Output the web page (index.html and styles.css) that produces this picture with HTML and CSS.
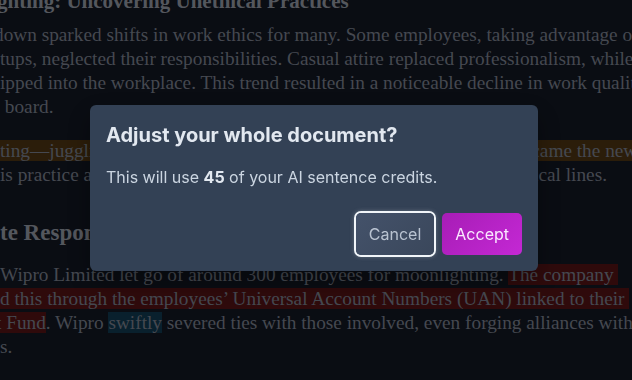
FILE: index.html
```html
<!DOCTYPE html>
<html lang="en">
<head>
    <meta charset="UTF-8">
    <meta name="viewport" content="width=device-width, initial-scale=1.0">
    <title>Adjust document</title>
    <link rel="stylesheet" href="styles.css">
</head>
<body>
    <main class="doc">
        <h1 class="doc-title"><span class="ln ln-cut-3">ghting: Uncovering Unethical Practices</span></h1>
        <p class="doc-para">
            <span class="ln ln-cut-6">down sparked shifts in work ethics for many. Some employees, taking advantage of</span>
            <span class="ln">tups, neglected their responsibilities. Casual attire replaced professionalism, while</span>
            <span class="ln">ipped into the workplace. This trend resulted in a noticeable decline in work quality</span>
            <span class="ln">&nbsp;board.</span>
        </p>
        <p class="doc-para">
            <span class="ln"><mark class="hl hl-orange">ting—juggling multiple jobs simultaneously while still employed, became the new norm</mark></span>
            <span class="ln">is practice also raised questions about workplace loyalty, blurring ethical lines.</span>
        </p>
        <h2 class="doc-heading"><span class="ln">te Response</span></h2>
        <p class="doc-para">
            <span class="ln">Wipro Limited let go of around 300 employees for moonlighting. <mark class="hl hl-red">The company&nbsp;</mark></span>
            <span class="ln"><mark class="hl hl-red">d this through the employees’ Universal Account Numbers (UAN) linked to their&nbsp;</mark></span>
            <span class="ln ln-cut-4"><mark class="hl hl-red">t Fund</mark>. Wipro <mark class="hl hl-blue">swiftly</mark> severed ties with those involved, even forging alliances with</span>
            <span class="ln">s.</span>
        </p>
    </main>

    <div class="backdrop">
        <section class="dialog" role="dialog" aria-labelledby="dialog-title">
            <h2 class="dialog-title" id="dialog-title">Adjust your whole document?</h2>
            <p class="dialog-text">This will use <strong>45</strong> of your AI sentence credits.</p>
            <div class="dialog-actions">
                <button class="btn btn-cancel">Cancel</button>
                <button class="btn btn-accept">Accept</button>
            </div>
        </section>
    </div>
</body>
</html>
```
FILE: styles.css
```css
/* Page */
body {
    margin: 0;
    height: 100vh;
    overflow: hidden;
    background-color: #141a26;
    font-family: "Liberation Serif", serif;
}

/* Document underneath (scrolled) */
.doc {
    margin-top: -14px;
    color: #8a91a0;
    font-size: 19.3px;
    line-height: 24px;
    white-space: nowrap;
}

.ln {
    display: block;
}

.ln-cut-3 { margin-left: -3px; }
.ln-cut-4 { margin-left: -4px; }
.ln-cut-6 { margin-left: -6px; }

.doc-title {
    margin: 0 0 7px;
    font-size: 21px;
    line-height: 30px;
    font-weight: 700;
    color: #a8aeba;
}

.doc-para {
    margin: 0 0 20px;
}

.doc-heading {
    margin: 30px 0 14px;
    font-size: 23px;
    line-height: 32px;
    font-weight: 700;
    color: #a8aeba;
}

.hl {
    color: inherit;
}

.hl-orange { background-color: #573a14; }
.hl-red { background-color: #5e1517; }
.hl-blue { background-color: #12405a; }

/* Modal */
.backdrop {
    position: fixed;
    inset: 0;
    background-color: rgba(0, 0, 0, 0.5);
    display: flex;
    align-items: center;
    justify-content: center;
    padding: 0 4px 4px 0;
}

.dialog {
    width: 448px;
    box-sizing: border-box;
    padding: 16px;
    background-color: #334155;
    border-radius: 6px;
    box-shadow: 0 10px 25px rgba(0, 0, 0, 0.3);
    font-family: Inter, "Liberation Sans", sans-serif;
}

.dialog-title {
    margin: 0 0 16px;
    font-size: 20px;
    line-height: 28px;
    font-weight: 700;
    color: #e2e8f0;
}

.dialog-text {
    margin: 0 0 24px;
    font-size: 16px;
    line-height: 24px;
    color: #cbd5e1;
}

.dialog-text strong {
    color: #e2e8f0;
}

.dialog-actions {
    display: flex;
    justify-content: flex-end;
    gap: 8px;
}

.btn {
    font-family: inherit;
    font-size: 16px;
    line-height: 24px;
    padding: 9px 13px;
    border: none;
    border-radius: 5px;
    cursor: pointer;
}

.btn-cancel {
    background: linear-gradient(135deg, #44526a, #3a475b);
    color: #b9c3d1;
    box-shadow: 0 0 0 2px #f1f5f9, 0 0 4px 2px rgba(241, 245, 249, 0.25);
}

.btn-accept {
    background: linear-gradient(135deg, #a71db6, #c428d4);
    color: #fae8ff;
}
```
